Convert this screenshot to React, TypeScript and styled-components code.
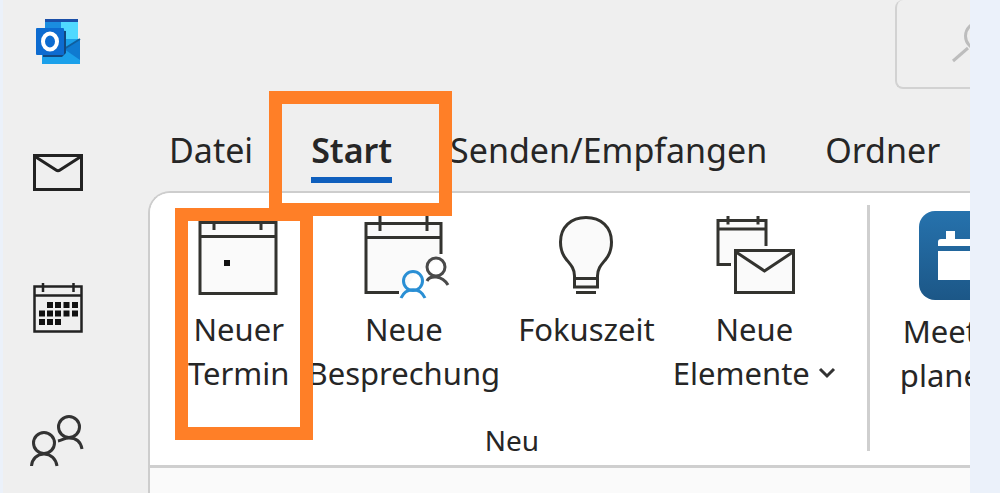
import React from "react";
import styled, { createGlobalStyle } from "styled-components";

const GlobalStyle = createGlobalStyle`
  * { box-sizing: border-box; }
  body {
    margin: 0;
    background: #ebf1fa;
    font-family: "Noto Sans", "Open Sans", sans-serif;
    color: #262626;
  }
  button {
    font: inherit;
    color: inherit;
    background: none;
    border: 0;
    padding: 0;
    cursor: pointer;
  }
  svg { display: block; flex: none; }
`;

const Page = styled.div`
  padding: 0 30px 0 3px;
  height: 100vh;
  overflow: hidden;
`;

const Window = styled.div`
  display: flex;
  height: 100%;
  overflow: hidden;
  background: #efefef;
`;

const Rail = styled.nav`
  flex: none;
  width: 145px;
  padding: 17px 0 0 25px;
  display: flex;
  flex-direction: column;
  align-items: flex-start;
`;

const RailButton = styled.button<{ $space: number }>`
  margin-bottom: ${(p) => p.$space}px;
`;

const Main = styled.main`
  flex: 1;
  min-width: 0;
  display: flex;
  flex-direction: column;
`;

const TopBar = styled.header`
  display: flex;
  justify-content: flex-end;
  height: 89px;
`;

const SearchButton = styled.button`
  display: flex;
  width: 75px;
  height: 89px;
  padding: 22px 0 0 54px;
  overflow: hidden;
  border: 2px solid #d2d2d2;
  border-width: 0 0 2px 2px;
  border-radius: 8px 0 0 8px;
`;

const Tabs = styled.nav`
  display: flex;
  gap: 58px;
  height: 102px;
  padding: 38px 0 0 21px;
`;

const Tab = styled.button<{ $active?: boolean }>`
  position: relative;
  flex: none;
  height: 56px;
  padding-bottom: 4px;
  font-size: 34px;
  line-height: 46px;
  white-space: nowrap;
  font-weight: ${(p) => (p.$active ? 600 : 400)};
  border-bottom: 6px solid ${(p) => (p.$active ? "#0f5fbd" : "transparent")};
`;

const Highlight = styled.span<{ $inset: string }>`
  position: absolute;
  z-index: 2;
  inset: ${(p) => p.$inset};
  border: 13px solid #ff7f27;
  pointer-events: none;
`;

const Sheet = styled.div`
  flex: 1;
  border: 2px solid #cdcdcd;
  border-width: 2px 0 0 2px;
  border-top-left-radius: 22px;
  background: #fafafa;
`;

const Ribbon = styled.div`
  display: flex;
  height: 275px;
  padding: 12px 0 14px;
  border-bottom: 3px solid #cfcfcf;
  border-top-left-radius: 20px;
  background: #fff;
`;

const Group = styled.section`
  flex: none;
  display: flex;
  flex-direction: column;
  padding: 0 31px 0 38px;
  border-right: 3px solid #cfcfcf;

  & + & {
    padding: 0 30px;
  }
`;

const Actions = styled.div`
  flex: none;
  display: flex;
  align-items: flex-start;
  gap: 18px;
  height: 222px;
  padding-top: 6px;
`;

const Action = styled.button`
  position: relative;
  flex: none;
  display: flex;
  flex-direction: column;
  align-items: center;
  gap: 8px;
`;

const Label = styled.span`
  font-size: 31px;
  line-height: 44px;
  white-space: nowrap;
`;

const Line = styled.span`
  display: flex;
  align-items: center;
  justify-content: center;
  gap: 8px;
`;

const GroupName = styled.span`
  font-size: 28px;
  line-height: 26px;
  text-align: center;
`;

const INK = "#33332f";

const Logo = () => (
  <svg width="54" height="48" viewBox="0 0 54 48" aria-hidden="true">
    <path d="M17 3H50V24H17Z" fill="#28a8ea" />
    <path d="M17 3H34V22H17Z" fill="#1a8de0" />
    <path d="M33 3H50V24H33Z" fill="#50d9ff" />
    <path d="M17 2H50V5H17Z" fill="#1a4fa8" />
    <path d="M14 22H50L52 24V47H14Z" fill="#1ba0ea" />
    <path d="M52 22L36 32L52 43Z" fill="#0f7ad0" />
    <path d="M52 22L36 32" stroke="#0f5f9e" strokeWidth="2" />
    <path d="M30 13L38 14V36L34 40H15V37Z" fill="#12487f" />
    <rect x="8" y="11" width="28" height="27" rx="1" fill="#0d6bd0" />
    <ellipse cx="22" cy="24.500" rx="7" ry="8" fill="none" stroke="#fff" strokeWidth="4" />
  </svg>
);

const MailIcon = () => (
  <svg width="60" height="40" viewBox="0 0 60 40" fill="none" stroke="#222" strokeWidth="3" aria-hidden="true">
    <rect x="6.5" y="2.5" width="47" height="34" />
    <path d="M7 3.500L28 17Q30 18.500 32 17L53 3.500" />
  </svg>
);

const CalendarIcon = () => (
  <svg width="60" height="52" viewBox="0 0 60 52" aria-hidden="true">
    <path d="M6.500 3.500H53.500V48.500H6.500ZM6.500 12.500H53.500M15 0V9M45.500 0V9" fill="none" stroke="#222" strokeWidth="2.500" />
    {[[19, 19], [27, 19], [35.5, 19], [44, 19], [11, 27.5], [19, 27.5], [27, 27.5], [35.5, 27.5], [44, 27.5], [11, 36], [19, 36], [27, 36]].map(
      ([x, y]) => <rect key={`${x}-${y}`} x={x} y={y} width="6" height="6" fill="#111" />
    )}
  </svg>
);

const PeopleIcon = () => (
  <svg width="60" height="56" viewBox="0 0 60 56" fill="none" stroke="#333" strokeWidth="3" aria-hidden="true">
    <circle cx="41" cy="13" r="10.500" />
    <circle cx="16" cy="29" r="10.500" />
    <path d="M30 27C35 26 36 24 41 24C49 24 53 29 54 35M3.500 52C4 45 9 40 16 40C23 40 28 45 29 52" />
  </svg>
);

const SearchIcon = () => (
  <svg width="48" height="44" viewBox="0 0 48 44" fill="none" stroke="#bdbdbd" strokeWidth="3" aria-hidden="true">
    <path d="M2 39L17 26" />
    <circle cx="28" cy="14" r="13.500" />
  </svg>
);

const AppointmentIcon = () => (
  <svg width="84" height="88" viewBox="0 0 84 88" aria-hidden="true">
    <path d="M3 11.500H79V82.500H3Z" fill="#fafafa" />
    <path d="M3 11.500H79V82.500H3ZM3 25.500H79M17 5V19M64 5V19" fill="none" stroke={INK} strokeWidth="3" />
    <rect x="27" y="49" width="6" height="6" fill="#111" />
  </svg>
);

const MeetingIcon = () => (
  <svg width="92" height="88" viewBox="0 0 92 88" fill="none" strokeWidth="3" aria-hidden="true">
    <path d="M8 11.500H83V47L58 61L46 81H8Z" fill="#fafafa" />
    <path d="M41 81.500H8V12.500H83V43M8 26.500H83M22 4V20M69 4V20" stroke={INK} />
    <circle cx="78" cy="56" r="9" stroke="#4a4a4a" />
    <path d="M69 70C72 64 84 64 90 74" stroke="#4a4a4a" />
    <circle cx="55" cy="70" r="9.500" stroke="#2a8fd4" />
    <path d="M43 87C48 76 62 76 67 87" stroke="#2a8fd4" />
  </svg>
);

const BulbIcon = () => (
  <svg width="60" height="88" viewBox="0 0 60 88" fill="#fafafa" stroke={INK} strokeWidth="3" aria-hidden="true">
    <path d="M18.500 76V65C18.500 57 14 53 10 48C6 43 4.500 37 4.500 31C4.500 16 15 6.500 30 6.500C45 6.500 55.500 16 55.500 31C55.500 37 54 43 50 48C46 53 41.500 57 41.500 65V76Z" />
    <path d="M18.500 67.500H41.500M20 81.500H40" />
  </svg>
);

const NewItemsIcon = () => (
  <svg width="84" height="88" viewBox="0 0 84 88" fill="none" stroke={INK} strokeWidth="3" aria-hidden="true">
    <path d="M6 9H55V53H6Z" fill="#fafafa" stroke="none" />
    <path d="M19 53.500H6V9.500H54V35M6 18H54M16 5V13.500M46 5V13.500" />
    <rect x="23.500" y="39.500" width="58" height="42" fill="#fafafa" />
    <path d="M24 41L52.500 60L81 41" />
  </svg>
);

const PlannerIcon = () => (
  <svg width="88" height="90" viewBox="0 0 88 90" aria-hidden="true">
    <defs>
      <linearGradient id="planner" x1="0" y1="0" x2="0" y2="1">
        <stop offset="0" stopColor="#2672ad" />
        <stop offset="1" stopColor="#1c5787" />
      </linearGradient>
    </defs>
    <rect width="88" height="89" rx="16" fill="url(#planner)" />
    <path d="M19 35V31Q19 28 22 28H27V20H36V28H53V20H62V28H66Q69 28 69 31V35ZM19 40H69V69H19Z" fill="#fff" />
  </svg>
);

const Chevron = () => (
  <svg width="18" height="12" viewBox="0 0 18 12" fill="none" stroke="#333" strokeWidth="3" aria-hidden="true">
    <path d="M2 2L9 9L16 2" />
  </svg>
);

const actions = [
  { icon: <AppointmentIcon />, lines: ["Neuer", "Termin"], marked: true },
  { icon: <MeetingIcon />, lines: ["Neue", "Besprechung"] },
  { icon: <BulbIcon />, lines: ["Fokuszeit"] },
  { icon: <NewItemsIcon />, lines: ["Neue", "Elemente"], menu: true },
];

type ActionProps = { icon: React.ReactNode; lines: string[]; marked?: boolean; menu?: boolean };

const RibbonAction = ({ icon, lines, marked, menu }: ActionProps) => (
  <Action type="button">
    {icon}
    <Label>
      {lines.map((line, i) => (
        <Line key={line}>
          {line}
          {menu && i === lines.length - 1 && <Chevron />}
        </Line>
      ))}
    </Label>
    {marked && <Highlight $inset="-3px -23px -45px -13px" />}
  </Action>
);

export default function App() {
  return (
    <>
      <GlobalStyle />
      <Page>
        <Window>
          <Rail aria-label="Module">
            <RailButton type="button" aria-label="Outlook" $space={88}><Logo /></RailButton>
            <RailButton type="button" aria-label="E-Mail" $space={90}><MailIcon /></RailButton>
            <RailButton type="button" aria-label="Kalender" $space={79}><CalendarIcon /></RailButton>
            <RailButton type="button" aria-label="Personen" $space={0}><PeopleIcon /></RailButton>
          </Rail>
          <Main>
            <TopBar>
              <SearchButton type="button" aria-label="Suchen"><SearchIcon /></SearchButton>
            </TopBar>
            <Tabs aria-label="Menüband">
              <Tab type="button">Datei</Tab>
              <Tab type="button" $active>
                Start
                <Highlight $inset="-36px -60px -39px -42px" />
              </Tab>
              <Tab type="button">Senden/Empfangen</Tab>
              <Tab type="button">Ordner</Tab>
            </Tabs>
            <Sheet>
              <Ribbon>
                <Group>
                  <Actions>
                    {actions.map((a) => <RibbonAction key={a.lines.join(" ")} {...a} />)}
                  </Actions>
                  <GroupName>Neu</GroupName>
                </Group>
                <Group>
                  <Actions>
                    <RibbonAction icon={<PlannerIcon />} lines={["Meeting", "planen"]} menu />
                  </Actions>
                </Group>
              </Ribbon>
            </Sheet>
          </Main>
        </Window>
      </Page>
    </>
  );
}
